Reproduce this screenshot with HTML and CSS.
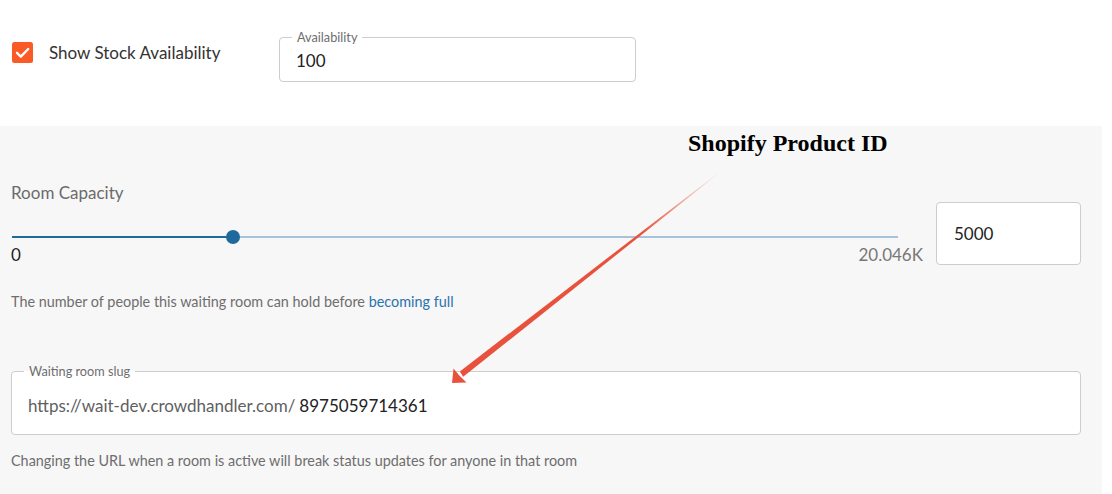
FILE: index.html
```html
<!DOCTYPE html>
<html lang="en">
<head>
<meta charset="UTF-8">
<meta name="viewport" content="width=device-width, initial-scale=1.0">
<title>Waiting Room Settings</title>
<link rel="stylesheet" href="styles.css">
</head>
<body>

<div class="stockRow">
  <label class="checkField">
    <svg class="checkBox" width="21" height="21" viewBox="0 0 21 21">
      <rect width="21" height="21" rx="2.5" fill="#f95a26"/>
      <path d="M5 10.8 L8.8 14.6 L16.2 7" fill="none" stroke="#fff" stroke-width="2.4" stroke-linecap="round" stroke-linejoin="round"/>
    </svg>
    <span>Show Stock Availability</span>
  </label>
  <div class="outlined availField">
    <span class="floatLabel">Availability</span>
    <span class="fieldValue">100</span>
  </div>
</div>

<div class="settingsPanel">
  <div class="note">Shopify Product ID</div>
  <svg class="arrow" width="1102" height="368" viewBox="0 0 1102 368">
    <defs>
      <linearGradient id="fade" x1="720" y1="46" x2="462" y2="249" gradientUnits="userSpaceOnUse">
        <stop offset="0" stop-color="#e8523d" stop-opacity="0"/>
        <stop offset="0.3" stop-color="#e8523d" stop-opacity="1"/>
        <stop offset="1" stop-color="#e8523d" stop-opacity="1"/>
      </linearGradient>
    </defs>
    <polygon points="719.8,45.8 720.2,46.2 463.2,250.8 459.8,245.4" fill="url(#fade)"/>
    <polygon points="452,257 453.5,242.5 459.3,249.6 466.5,256.5" fill="#e8523d"/>
  </svg>

  <div class="capacityRow">
    <div class="sliderCol">
      <div class="sliderTitle">Room Capacity</div>
      <div class="slider">
        <div class="track"></div>
        <div class="trackFill" style="width: 24.94%"></div>
        <div class="thumb" style="left: 24.94%"></div>
      </div>
      <div class="sliderMarks">
        <span class="markMin">0</span>
        <span class="markMax">20.046K</span>
      </div>
    </div>
    <div class="capacityBox">5000</div>
  </div>

  <p class="helper">The number of people this waiting room can hold before <a href="#">becoming full</a></p>

  <div class="outlined slugField">
    <span class="floatLabel">Waiting room slug</span>
    <span class="slugPrefix">https://wait-dev.crowdhandler.com/</span>
    <span class="fieldValue">8975059714361</span>
  </div>

  <p class="helper slugHelper">Changing the URL when a room is active will break status updates for anyone in that room</p>
</div>

</body>
</html>
```

FILE: styles.css
```css
body {
  font-family: Lato, "Open Sans", sans-serif;
  margin: 0;
  background-color: #fff;
  color: #222;
}
.stockRow {
  display: flex;
  align-items: flex-start;
  height: 126px;
  box-sizing: border-box;
  padding: 37px 0 0 12px;
}
.checkField {
  display: flex;
  align-items: center;
  width: 267px;
  margin-top: 5px;
  font-size: 17px;
  line-height: 21px;
  color: #333;
}
.checkBox {
  margin-right: 16px;
}
.outlined {
  position: relative;
  display: flex;
  align-items: center;
  box-sizing: border-box;
  background-color: #fff;
  border: 1px solid #cdcdcd;
  border-radius: 4px;
  padding: 0 16px;
  font-size: 17px;
}
.floatLabel {
  position: absolute;
  top: -8px;
  left: 12px;
  padding: 0 5px;
  font-size: 12.7px;
  line-height: 14px;
  color: #6e6e6e;
  background: linear-gradient(to bottom, transparent 50%, #fff 50%);
}
.availField {
  width: 357px;
  height: 45px;
  padding-top: 2px;
}
.availField .floatLabel {
  background: #fff;
}
.fieldValue {
  color: #222;
}
.settingsPanel {
  position: relative;
  width: 1102px;
  min-height: 368px;
  box-sizing: border-box;
  padding: 57px 21px 0 11px;
  background-color: #f7f7f7;
}
.note {
  position: absolute;
  left: 688px;
  top: 4px;
  font-family: "Liberation Serif", serif;
  font-weight: bold;
  font-size: 24px;
  line-height: 26px;
  color: #000;
}
.arrow {
  position: absolute;
  left: 0;
  top: 0;
  z-index: 2;
}
.capacityRow {
  display: flex;
  align-items: flex-end;
  gap: 13px;
}
.sliderCol {
  width: 912px;
}
.sliderTitle {
  font-size: 17px;
  line-height: 20px;
  color: #6b6b6b;
}
.slider {
  position: relative;
  height: 14px;
  margin: 27px 25px 0 1px;
}
.track {
  position: absolute;
  left: 0;
  right: 0;
  top: 6px;
  height: 2px;
  background-color: #a6c3db;
}
.trackFill {
  position: absolute;
  left: 0;
  top: 6px;
  height: 2px;
  background-color: #1f6a9c;
}
.thumb {
  position: absolute;
  top: 0;
  width: 14px;
  height: 14px;
  margin-left: -7px;
  border-radius: 50%;
  background-color: #1f6a9c;
}
.sliderMarks {
  display: flex;
  justify-content: space-between;
  margin-top: 1px;
  font-size: 17px;
  line-height: 20px;
}
.markMin {
  color: #222;
}
.markMax {
  color: #777;
}
.capacityBox {
  width: 145px;
  height: 63px;
  box-sizing: border-box;
  display: flex;
  align-items: center;
  padding-left: 17px;
  background-color: #fff;
  border: 1px solid #cdcdcd;
  border-radius: 4px;
  font-size: 17px;
  color: #222;
}
.helper {
  margin: 27px 0 0;
  font-size: 14.4px;
  line-height: 19px;
  color: #6e6e6e;
}
.helper a {
  color: #2a73ad;
  text-decoration: none;
}
.slugField {
  width: 1070px;
  height: 64px;
  margin-top: 60px;
  padding-top: 4px;
}
.slugPrefix {
  color: #5f5f5f;
  margin-right: 4px;
}
.slugHelper {
  margin-top: 16px;
}
```
